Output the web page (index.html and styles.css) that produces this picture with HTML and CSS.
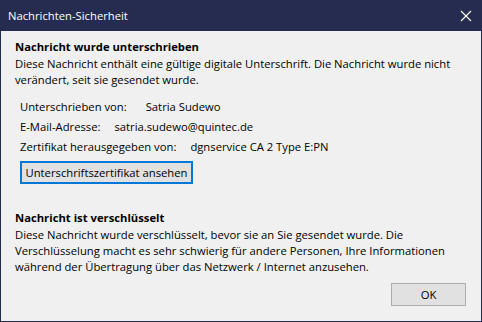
FILE: index.html
```html
<!DOCTYPE html>
<html lang="de">
<head>
<meta charset="utf-8">
<link rel="stylesheet" href="styles.css">
</head>
<body>
<div class="window">
  <div class="titlebar">
    <span class="title">Nachrichten-Sicherheit</span>
    <svg class="close" width="12" height="12" viewBox="0 0 12 12"><path d="M1 1L11 11M11 1L1 11" stroke="#ffffff" stroke-width="1.2" fill="none"/></svg>
  </div>
  <div class="content">
    <section class="sig">
      <h2 class="heading">Nachricht wurde unterschrieben</h2>
      <p class="text">Diese Nachricht enthält eine gültige digitale Unterschrift. Die Nachricht wurde nicht verändert, seit sie gesendet wurde.</p>
      <div class="details">
        <div class="row"><span class="label l1">Unterschrieben von:</span><span>Satria Sudewo</span></div>
        <div class="row"><span class="label">E-Mail-Adresse:</span><span>satria.sudewo@quintec.de</span></div>
        <div class="row"><span class="label">Zertifikat herausgegeben von:</span><span>dgnservice CA 2 Type E:PN</span></div>
      </div>
      <button class="btn btn-focus">Unterschriftszertifikat ansehen</button>
    </section>
    <section class="enc">
      <h2 class="heading">Nachricht ist verschlüsselt</h2>
      <p class="text">Diese Nachricht wurde verschlüsselt, bevor sie an Sie gesendet wurde. Die Verschlüsselung macht es sehr schwierig für andere Personen, Ihre Informationen während der Übertragung über das Netzwerk / Internet anzusehen.</p>
    </section>
    <div class="footer">
      <button class="btn btn-ok">OK</button>
    </div>
  </div>
</div>
</body>
</html>
```
FILE: styles.css
```css
* { box-sizing: border-box; }
html, body { margin: 0; padding: 0; }
body {
  width: 482px;
  height: 322px;
  font-family: "Open Sans", "Noto Sans", sans-serif;
  font-size: 11.25px;
  color: #000;
  overflow: hidden;
}
.window {
  width: 482px;
  height: 322px;
  border: 1px solid #252c4f;
  border-top: none;
  display: flex;
  flex-direction: column;
  background: #f0f0f0;
}
.titlebar {
  height: 31px;
  background: #252c4f;
  display: flex;
  align-items: center;
  justify-content: space-between;
  padding: 0 10px 0 8px;
  color: #fff;
  margin: 0 -1px;
}
.title { font-size: 11.25px; line-height: 16px; }
.close { display: block; }
.content {
  flex: 1;
  padding: 8px 14px 0 14px;
  display: flex;
  flex-direction: column;
}
.heading {
  margin: 0;
  font-size: 11.25px;
  font-weight: 700;
  line-height: 16px;
}
.text {
  margin: 1px 0 0 0;
  line-height: 16px;
}
.details {
  margin: 11px 0 0 5px;
  display: flex;
  flex-direction: column;
  gap: 4px;
}
.row { line-height: 16px; display: flex; }
.label { margin-right: 14px; }
.l1 { margin-right: 19px; }
.btn {
  font-family: inherit;
  font-size: 11.25px;
  color: #000;
  background: #e1e1e1;
  border: 1px solid #adadad;
  padding: 0;
  margin: 0;
  white-space: nowrap;
}
.btn-focus {
  align-self: flex-start;
  margin: 6px 0 0 5px;
  height: 23px;
  width: 173px;
  border: 2px solid #0078d7;
}
.sig { display: flex; flex-direction: column; }
.enc { margin-top: 26px; }
.footer {
  display: flex;
  justify-content: flex-end;
  margin-top: 8px;
  padding-right: 1px;
}
.btn-ok { width: 75px; height: 23px; }
```
